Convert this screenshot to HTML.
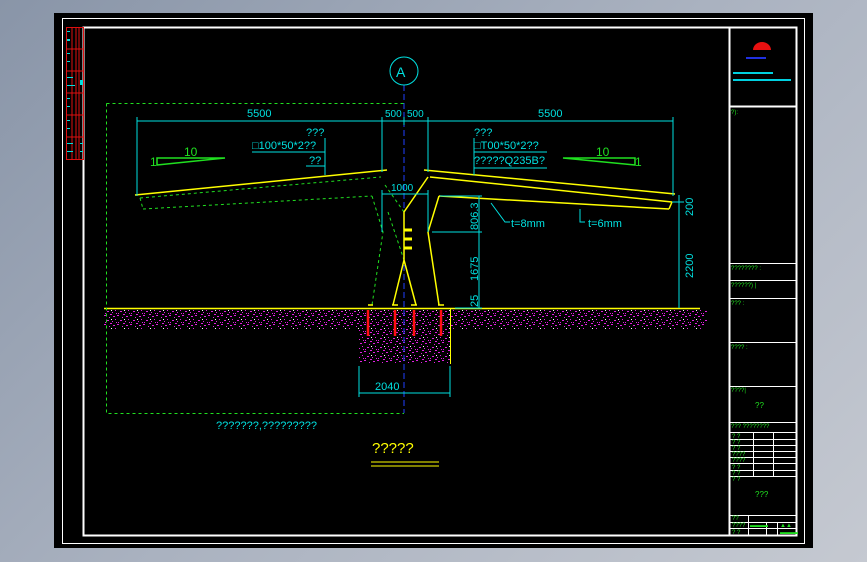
<!DOCTYPE html>
<html><head><meta charset="utf-8"><style>
html,body{margin:0;padding:0;}
body{width:867px;height:562px;overflow:hidden;background:linear-gradient(135deg,#8995a8 0%,#aab2c0 50%,#c5c9d1 100%);}
svg{position:absolute;left:0;top:0;}
text{font-family:"Liberation Sans",sans-serif;}
</style></head><body>
<svg width="867" height="562" viewBox="0 0 867 562">
<defs>
<pattern id="h" width="13" height="9" patternUnits="userSpaceOnUse">
<rect x="0" y="0" width="2" height="1" fill="#e020e0"/><rect x="5" y="2" width="1" height="1" fill="#e020e0"/><rect x="9" y="1" width="2" height="1" fill="#e020e0"/><rect x="3" y="5" width="2" height="1" fill="#e020e0"/><rect x="8" y="6" width="1" height="1" fill="#e020e0"/><rect x="11" y="4" width="1" height="1" fill="#e020e0"/><rect x="1" y="7" width="1" height="1" fill="#e020e0"/><rect x="6" y="8" width="2" height="1" fill="#e020e0"/><rect x="12" y="7" width="1" height="1" fill="#e020e0"/><rect x="7" y="4" width="1" height="1" fill="#fff"/>
</pattern>
</defs>
<rect x="54" y="13" width="759" height="535" fill="#000"/>
<rect x="62.5" y="18.5" width="742" height="525" fill="none" stroke="#fff" stroke-width="1"/>
<rect x="83.5" y="27.5" width="713" height="508" fill="none" stroke="#fff" stroke-width="2"/>
<!-- left red strip -->
<g stroke="#e01010" stroke-width="1" fill="none">
<rect x="66.5" y="27.5" width="17" height="132"/>
<line x1="72" y1="27" x2="72" y2="160"/><line x1="76" y1="27" x2="76" y2="160"/><line x1="79" y1="27" x2="79" y2="160"/>
<line x1="66" y1="49" x2="84" y2="49"/><line x1="66" y1="71" x2="84" y2="71"/><line x1="66" y1="93" x2="84" y2="93"/><line x1="66" y1="115" x2="84" y2="115"/><line x1="66" y1="137" x2="84" y2="137"/>
</g>
<g fill="#00e0e0"><rect x="67" y="31" width="3" height="1"/><rect x="67" y="39" width="3" height="2"/><rect x="67" y="53" width="3" height="1"/><rect x="67" y="61" width="3" height="1"/><rect x="67" y="77" width="6" height="1"/><rect x="67" y="85" width="8" height="1"/><rect x="80" y="80" width="3" height="5"/><rect x="67" y="98" width="3" height="1"/><rect x="67" y="106" width="3" height="1"/><rect x="67" y="120" width="3" height="1"/><rect x="67" y="128" width="3" height="1"/><rect x="67" y="143" width="6" height="1"/><rect x="67" y="151" width="6" height="1"/><rect x="80" y="143" width="3" height="1"/><rect x="80" y="151" width="3" height="1"/></g>

<!-- title block -->
<g stroke="#fff" stroke-width="1" fill="none">
<line x1="729.5" y1="27" x2="729.5" y2="535" stroke-width="2"/>
<line x1="729" y1="106.5" x2="796" y2="106.5" stroke-width="2"/>
<line x1="729" y1="263.5" x2="796" y2="263.5"/><line x1="729" y1="280.5" x2="796" y2="280.5"/><line x1="729" y1="298.5" x2="796" y2="298.5"/><line x1="729" y1="342.5" x2="796" y2="342.5"/><line x1="729" y1="386.5" x2="796" y2="386.5"/><line x1="729" y1="422.5" x2="796" y2="422.5"/><line x1="729" y1="432.5" x2="796" y2="432.5"/><line x1="729" y1="439.5" x2="796" y2="439.5"/><line x1="729" y1="445.5" x2="796" y2="445.5"/><line x1="729" y1="451.5" x2="796" y2="451.5"/><line x1="729" y1="457.5" x2="796" y2="457.5"/><line x1="729" y1="463.5" x2="796" y2="463.5"/><line x1="729" y1="470.5" x2="796" y2="470.5"/><line x1="729" y1="476.5" x2="796" y2="476.5"/><line x1="729" y1="515.5" x2="796" y2="515.5"/><line x1="729" y1="522.5" x2="796" y2="522.5"/><line x1="729" y1="528.5" x2="796" y2="528.5"/>
<line x1="753.5" y1="432" x2="753.5" y2="476"/><line x1="773.5" y1="432" x2="773.5" y2="476"/>
<line x1="748.5" y1="515" x2="748.5" y2="535"/><line x1="766.5" y1="522" x2="766.5" y2="535"/><line x1="777.5" y1="522" x2="777.5" y2="535"/>
</g>
<path d="M753 50 A9 8 0 0 1 771 50 Z" fill="#e81010"/>
<rect x="746" y="57" width="20" height="2" fill="#2030e0"/>
<rect x="733" y="72" width="40" height="2" fill="#00d0e0"/><rect x="733" y="79" width="58" height="2" fill="#00d0e0"/>
<g fill="#20e020" font-size="6">
<text x="731" y="114">?):</text><text x="731" y="270">???????? :</text><text x="731" y="287">??????) |</text><text x="731" y="305">??? :</text><text x="731" y="349">???? :</text><text x="731" y="392">????|</text><text x="755" y="408" font-size="8">??</text><text x="731" y="428">??? ????????</text>
<text x="732" y="438">? ?</text><text x="732" y="444">? ?</text><text x="732" y="450">? ?</text><text x="732" y="456">????</text><text x="732" y="462">????</text><text x="732" y="469">? ?</text><text x="732" y="475">? ?</text><text x="732" y="481">? ?</text><text x="755" y="497" font-size="8">???</text>
<text x="732" y="520">??</text><text x="732" y="527">????</text><text x="732" y="534">? ?</text><text x="750" y="527">▬▬▬</text><text x="780" y="527">▲▲</text><text x="780" y="534">▬▬▬</text>
</g>

<!-- hatch -->
<rect x="104" y="309" width="603" height="20" fill="url(#h)"/>
<rect x="359" y="309" width="92" height="55" fill="url(#h)"/>
<line x1="450.5" y1="309" x2="450.5" y2="364" stroke="#ffff00"/>
<line x1="104" y1="308.5" x2="700" y2="308.5" stroke="#ffff00" stroke-width="1.5"/>
<!-- green dashed box -->
<g stroke="#20e020" stroke-dasharray="3,3" fill="none" stroke-width="1">
<path d="M106.5 103.5 H404 M106.5 103.5 V413.5 H404"/>
<path d="M140 198 L381 177 M143 209 L372 196 M140 198 L143 209"/>
<path d="M385 185 L404 212 M372 196 L383 232 L372 305 M388 212 L404 260"/>
</g>
<line x1="404" y1="85" x2="404" y2="413" stroke="#2040ff" stroke-dasharray="6,3" stroke-width="1"/>
<!-- yellow structure -->
<g stroke="#ffff00" fill="none" stroke-width="1.5">
<path d="M135 195 L387 170"/>
<path d="M424 170 L675 194 M430 177 L672 202 M439 196 L669 209 M672 202 L669 209"/>
<path d="M428 177 L404 212 L404 260 L393 305 M404 260 L416 305 M439 196 L428 232 L439 305"/>
<path d="M368 305 h5 M392 305 h6 M411 305 h6 M438 305 h6"/>
</g>
<g stroke="#ffff00" stroke-width="3"><line x1="404" y1="230" x2="412" y2="230"/><line x1="404" y1="239" x2="412" y2="239"/><line x1="404" y1="248" x2="412" y2="248"/></g>
<g stroke="#ff1010" stroke-width="2.5"><line x1="368" y1="310" x2="368" y2="336"/><line x1="395" y1="310" x2="395" y2="336"/><line x1="414" y1="310" x2="414" y2="336"/><line x1="441" y1="310" x2="441" y2="336"/></g>
<!-- cyan dims -->
<g stroke="#00e0e0" fill="none" stroke-width="1">
<circle cx="404" cy="71" r="14"/>
<path d="M137 121 H673 M137 117 V196 M382 117 V172 M404 117 V125 M428 117 V172 M673 117 V196"/>
<path d="M382 194 H428 M382 190 V232 M428 190 V232"/>
<path d="M479 196 V308 M440 196 H482 M432 232 H482 M455 308 H482"/>
<path d="M679 195 V308 M672 202 H684"/>
<path d="M359 393 H450 M359 366 V397 M450 366 V397"/>
<path d="M252 152 H325 M306 166 H325 M325 138 V175"/>
<path d="M474 152 H547 M474 168 H547 M474 138 V175"/>
<path d="M491 203 L505 222 H510 M580 209 V222 H585"/>
</g>
<g fill="#00e0e0" font-size="11">
<text x="396" y="77" font-size="14">A</text>
<text x="247" y="117">5500</text><text x="385" y="117" font-size="10">500</text><text x="407" y="117" font-size="10">500</text><text x="538" y="117">5500</text>
<text x="391" y="191" font-size="10">1000</text>
<text x="306" y="136">???</text><text x="252" y="149">□100*50*2??</text><text x="309" y="164">??</text>
<text x="474" y="136">???</text><text x="474" y="149">□T00*50*2??</text><text x="474" y="164">?????Q235B?</text>
<text x="511" y="227">t=8mm</text><text x="588" y="227">t=6mm</text>
<text x="375" y="390">2040</text>
<text x="216" y="429">???????,?????????</text>
<text transform="translate(478,230) rotate(-90)">806.3</text>
<text transform="translate(478,281) rotate(-90)">1675</text>
<text transform="translate(478,307) rotate(-90)">25</text>
<text transform="translate(693,216) rotate(-90)">200</text>
<text transform="translate(693,278) rotate(-90)">2200</text>
</g>
<g fill="#20e020" font-size="12"><text x="184" y="156">10</text><text x="150" y="166">1</text><text x="596" y="156">10</text><text x="635" y="166">1</text></g>
<g stroke="#20e020" fill="none" stroke-width="1.5"><path d="M157 165 L225 158 H157 Z"/><path d="M635 165 L563 158 H635 Z"/></g>
<text x="372" y="453" fill="#ffff00" font-size="15">?????</text>
<g stroke="#ffff00" stroke-width="1"><line x1="371" y1="462" x2="439" y2="462"/><line x1="371" y1="466" x2="439" y2="466"/></g>
</svg>
</body></html>
